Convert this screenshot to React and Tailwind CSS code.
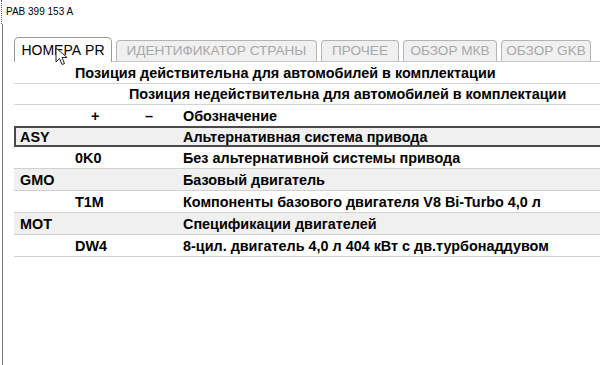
import React from 'react';

const tabs = [
  { label: 'НОМЕРА PR', w: 'w-[98px]', active: true },
  { label: 'ИДЕНТИФИКАТОР СТРАНЫ', w: 'w-[201px]' },
  { label: 'ПРОЧЕЕ', w: 'w-[78px]' },
  { label: 'ОБЗОР МКВ', w: 'w-[94px]' },
  { label: 'ОБЗОР GKB', w: 'w-[90px]' },
];

const rows = [
  { code: 'ASY', text: 'Альтернативная система привода', group: true, selected: true },
  { code: '0K0', text: 'Без альтернативной системы привода' },
  { code: 'GMO', text: 'Базовый двигатель', group: true },
  { code: 'T1M', text: 'Компоненты базового двигателя V8 Bi-Turbo 4,0 л' },
  { code: 'MOT', text: 'Спецификации двигателей', group: true },
  { code: 'DW4', text: '8-цил. двигатель 4,0 л 404 кВт с дв.турбонаддувом' },
];

function Cursor() {
  return (
    <svg className="absolute left-[55px] top-[47px]" width="14" height="20" viewBox="0 0 14 20">
      <path d="M1 1 L1 15 L4.5 11.5 L7 17.5 L9.5 16.5 L7 10.5 L12 10.5 Z" fill="#fff" stroke="#222" strokeWidth="1" strokeLinejoin="round" />
    </svg>
  );
}

export default function App() {
  return (
    <div className="relative w-[600px] h-[365px] overflow-hidden bg-white text-black font-['Liberation_Sans',Arial,sans-serif]">
      {/* title strip */}
      <div className="h-[24px] ml-[1px] border-l border-dotted border-[#555] pl-[4px] pt-[6px] text-[10px] leading-[12px]">
        PAB 399 153 A
      </div>

      <div className="ml-[2px] h-[341px] border-l border-[#7a7a7a] pl-[11px]">
        {/* tabs */}
        <div className="flex items-end gap-[4px] pt-[13px] h-[38px] border-b border-[#c8c8c8]">
          {tabs.map((t) =>
            t.active ? (
              <div
                key={t.label}
                className={`${t.w} h-[25px] -mb-px flex items-center justify-center rounded-t-[5px] border border-b-0 border-[#9a9a9a] bg-white text-[14px] text-black`}
              >
                {t.label}
              </div>
            ) : (
              <div
                key={t.label}
                className={`${t.w} h-[21px] flex items-center justify-center rounded-t-[4px] border border-b-0 border-[#b4b4b4] bg-[#f0f0f0] text-[13.6px] text-[#a8a8a8]`}
              >
                {t.label}
              </div>
            )
          )}
        </div>

        {/* table */}
        <div className="w-[620px] text-[14.4px] font-bold leading-[16px]">
          <div className="grid grid-cols-[61px_54px_54px_1fr] h-[22px] items-center border-b border-[#d4d4d4]">
            <div />
            <div className="col-span-3">Позиция действительна для автомобилей в комплектации</div>
          </div>
          <div className="grid grid-cols-[61px_54px_54px_1fr] h-[21px] items-center border-b border-[#d4d4d4]">
            <div />
            <div />
            <div className="col-span-2">Позиция недействительна для автомобилей в комплектации</div>
          </div>
          <div className="grid grid-cols-[61px_54px_54px_1fr] h-[21px] items-center">
            <div />
            <div className="pl-[16px]">+</div>
            <div className="pl-[16px]">–</div>
            <div>Обозначение</div>
          </div>

          {rows.map((r) => (
            <div
              key={r.code}
              className={`grid grid-cols-[61px_108px_1fr] items-center ${
                r.selected
                  ? 'h-[21px] border-2 border-[#4a4a4a] bg-[#f0f0f0]'
                  : r.group
                  ? 'h-[22px] border-b border-[#d0d0d0] bg-[#f0f0f0]'
                  : 'h-[22px] border-b border-[#d0d0d0] bg-white'
              }`}
            >
              {r.group ? (
                <>
                  <div className={r.selected ? 'pl-[4px]' : 'pl-[6px]'}>{r.code}</div>
                  <div />
                </>
              ) : (
                <>
                  <div />
                  <div>{r.code}</div>
                </>
              )}
              <div className={r.selected ? '-ml-[2px]' : ''}>{r.text}</div>
            </div>
          ))}
        </div>
      </div>

      <Cursor />
    </div>
  );
}
